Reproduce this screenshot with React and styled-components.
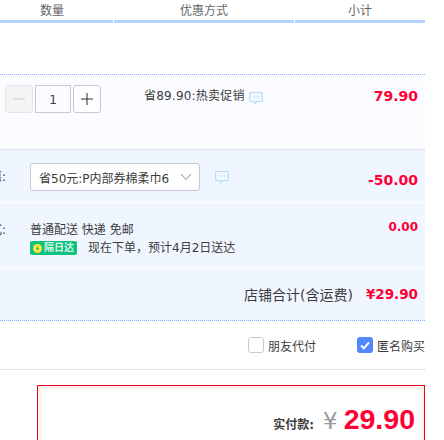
import React from 'react';
import styled, { createGlobalStyle } from 'styled-components';

const GlobalStyle = createGlobalStyle`
    html, body { margin:0; padding:0; background:#fff; }
    body { font-family:"DejaVu Sans","Noto Sans CJK SC",sans-serif; font-size:12px; color:#3c3c3c; overflow:hidden; }
`

const CommentIcon = () => (
    <svg width="14" height="14" viewBox="0 0 14 14" fill="none">
        <path d="M1.5 1.5h11a.8.8 0 0 1 .8.8v7.4a.8.8 0 0 1-.8.8H7.6L5.6 12.8 5 10.5H1.5a.8.8 0 0 1-.8-.8V2.3a.8.8 0 0 1 .8-.8z" fill="#f2f8ff" stroke="#b5dcf7" strokeWidth="1.2" />
        <path d="M4 6h1.4M6.4 6h1.4M8.8 6h1.4" stroke="#b5dcf7" strokeWidth="1" />
    </svg>
)

const Chevron = () => (
    <svg width="12" height="8" viewBox="0 0 12 8" fill="none">
        <path d="M1 1l5 5.5L11 1" stroke="#8c8c8c" strokeWidth="1" />
    </svg>
)

const Check = () => (
    <svg width="10" height="9" viewBox="0 0 10 9" fill="none">
        <path d="M1 4.5l2.8 2.8L9 1.5" stroke="#fff" strokeWidth="2" />
    </svg>
)

const Bolt = () => (
    <svg width="9" height="9" viewBox="0 0 8 8">
        <circle cx="4" cy="4" r="4" fill="#ffe23a" />
        <path d="M4.6 1L2.6 4.4h1.3L3.4 7l2-3.4H4.2z" fill="#0dc27a" />
    </svg>
)

const App = () => {
    return <Page>
        <GlobalStyle />
        <Header>
            <HeadCell $width={113} $pad={9}>数量</HeadCell>
            <HeadCell $width={180}>优惠方式</HeadCell>
            <HeadCell $width={130}>小计</HeadCell>
        </Header>

        <ItemRow>
            <Stepper>
                <StepButton $disabled>
                    <svg width="12" height="12" viewBox="0 0 12 12"><path d="M0 6h12" stroke="#c8c8c8" strokeWidth="1" /></svg>
                </StepButton>
                <QtyInput>1</QtyInput>
                <StepButton>
                    <svg width="12" height="12" viewBox="0 0 12 12"><path d="M0 6h12M6 0v12" stroke="#2c2c3c" strokeWidth="1" /></svg>
                </StepButton>
            </Stepper>
            <PromoText>
                省89.90:热卖促销
                <PromoIcon><CommentIcon /></PromoIcon>
            </PromoText>
            <Price $top={3}>79.90</Price>
        </ItemRow>

        <CouponRow>
            <Label>惠:</Label>
            <Select>
                <span>省50元:P内部券棉柔巾6</span>
                <Chevron />
            </Select>
            <CouponIcon><CommentIcon /></CouponIcon>
            <Price $top={6}>-50.00</Price>
        </CouponRow>

        <ShippingRow>
            <Label>式:</Label>
            <ShipInfo>
                <div>普通配送 快递 免邮</div>
                <ShipLine>
                    <Badge><Bolt />隔日达</Badge>
                    <span>现在下单，预计4月2日送达</span>
                </ShipLine>
            </ShipInfo>
            <SmallPrice>0.00</SmallPrice>
        </ShippingRow>

        <TotalRow>
            <TotalLabel>店铺合计(含运费)</TotalLabel>
            <TotalPrice>¥29.90</TotalPrice>
        </TotalRow>

        <OptionRow>
            <Option>
                <CheckBox />
                朋友代付
            </Option>
            <Option>
                <CheckBox $checked><Check /></CheckBox>
                匿名购买
            </Option>
        </OptionRow>

        <PayBox>
            <PayInner>
                <PayLabel>实付款:</PayLabel>
                <Yen>¥</Yen>
                <PayAmount>29.90</PayAmount>
            </PayInner>
        </PayBox>
    </Page>
};

export default App;

const Page = styled.div`
    width:425px;
    height:440px;
    overflow:hidden;
`
const Header = styled.div`
    display:flex;
    gap:1px;
    height:23px;
`
const HeadCell = styled.div`
    width:${p => p.$width}px;
    box-sizing:border-box;
    padding-right:${p => p.$pad || 0}px;
    height:23px;
    line-height:22px;
    text-align:center;
    color:#666;
    font-size:12px;
    border-bottom:3px solid #b2d1ff;
`
const ItemRow = styled.div`
    display:flex;
    align-items:flex-start;
    margin-top:51px;
    height:75px;
    box-sizing:border-box;
    padding:10px 7px 0 5px;
    background:#fafcff;
    border-top:1px dotted #80b2ff;
`
const Stepper = styled.div`
    display:flex;
    gap:2px;
    width:139px;
    flex-shrink:0;
`
const StepButton = styled.div`
    width:28px;
    height:28px;
    display:flex;
    align-items:center;
    justify-content:center;
    box-sizing:border-box;
    border:1px solid ${p => p.$disabled ? '#e6e6e6' : '#c8c8d0'};
    border-radius:3px;
    background:${p => p.$disabled ? '#f5f5f5' : '#fff'};
`
const QtyInput = styled.div`
    width:36px;
    height:28px;
    line-height:28px;
    text-align:center;
    box-sizing:border-box;
    border:1px solid #c8c8d0;
    color:#3c3c3c;
`
const PromoText = styled.div`
    position:relative;
    width:100px;
    flex-shrink:0;
    line-height:22px;
    letter-spacing:0.2px;
    white-space:nowrap;
`
const PromoIcon = styled.span`
    position:absolute;
    left:105px;
    top:6px;
    line-height:0;
`
const Price = styled.div`
    margin-left:auto;
    margin-top:${p => p.$top}px;
    color:#ff0036;
    font-size:14px;
    font-weight:700;
`
const CouponRow = styled.div`
    display:flex;
    align-items:center;
    height:54px;
    box-sizing:border-box;
    padding:2px 7px 0 0;
    background:#f0f6ff;
    border-top:1px dotted #d0d0d0;
    border-bottom:1px solid #fff;
`
const Label = styled.div`
    width:30px;
    flex-shrink:0;
    margin-left:-12px;
    text-align:right;
    box-sizing:border-box;
    padding-right:12px;
    line-height:18px;
    white-space:nowrap;
`
const Select = styled.div`
    display:flex;
    align-items:center;
    justify-content:space-between;
    width:170px;
    height:28px;
    margin-left:12px;
    padding:0 7px 0 8px;
    box-sizing:border-box;
    background:#fff;
    border:1px solid #c8c8d0;
    border-radius:3px;
    white-space:nowrap;
`
const CouponIcon = styled.span`
    margin-left:15px;
    line-height:0;
`
const ShippingRow = styled.div`
    display:flex;
    align-items:flex-start;
    height:65px;
    box-sizing:border-box;
    padding:18px 7px 0 0;
    background:#f0f6ff;
    border-bottom:1px solid #fff;
`
const ShipInfo = styled.div`
    margin-left:12px;
    line-height:18px;
    white-space:nowrap;
`
const ShipLine = styled.div`
    display:flex;
    align-items:center;
    gap:11px;
`
const Badge = styled.span`
    display:inline-flex;
    align-items:center;
    gap:2px;
    width:47px;
    height:14px;
    padding-left:3px;
    box-sizing:border-box;
    background:#0dc27a;
    border-radius:2px;
    color:#d8f5e8;
    font-size:10px;
    font-weight:700;
`
const SmallPrice = styled.div`
    margin-left:auto;
    margin-top:-1px;
    color:#ff0036;
    font-size:12px;
    font-weight:700;
`
const TotalRow = styled.div`
    display:flex;
    align-items:center;
    justify-content:flex-end;
    gap:13px;
    height:53px;
    box-sizing:border-box;
    padding:0 7px 0 0;
    background:#f0f6ff;
    border-bottom:1px dotted #80b2ff;
`
const TotalLabel = styled.span`
    font-size:14px;
`
const TotalPrice = styled.span`
    color:#ff0036;
    font-size:13.5px;
    font-weight:700;
`
const OptionRow = styled.div`
    display:flex;
    justify-content:flex-end;
    align-items:center;
    gap:41px;
    height:49px;
    box-sizing:border-box;
    border-bottom:1px dotted #d0d0d0;
    white-space:nowrap;
`
const Option = styled.div`
    display:flex;
    align-items:center;
    gap:4px;
`
const CheckBox = styled.span`
    display:flex;
    align-items:center;
    justify-content:center;
    width:16px;
    height:16px;
    box-sizing:border-box;
    border-radius:3px;
    background:${p => p.$checked ? '#5288ff' : '#fff'};
    border:${p => p.$checked ? 'none' : '1px solid #c8c8d0'};
`
const PayBox = styled.div`
    margin:15px 0 0 37px;
    height:80px;
    box-sizing:border-box;
    border:1px solid #e4002b;
    border-bottom:none;
`
const PayInner = styled.div`
    height:100%;
    box-sizing:border-box;
    border:3px solid #fff0e8;
    border-bottom:none;
    display:flex;
    justify-content:flex-end;
    align-items:baseline;
    padding:14px 6px 0 0;
`
const PayLabel = styled.span`
    font-size:12px;
    font-weight:700;
    color:#3c3c3c;
    margin-right:9px;
`
const Yen = styled.span`
    font-size:23px;
    color:#999;
    margin-right:6px;
`
const PayAmount = styled.span`
    font-family:"Liberation Sans",sans-serif;
    font-size:28.5px;
    font-weight:700;
    color:#ff0036;
`
